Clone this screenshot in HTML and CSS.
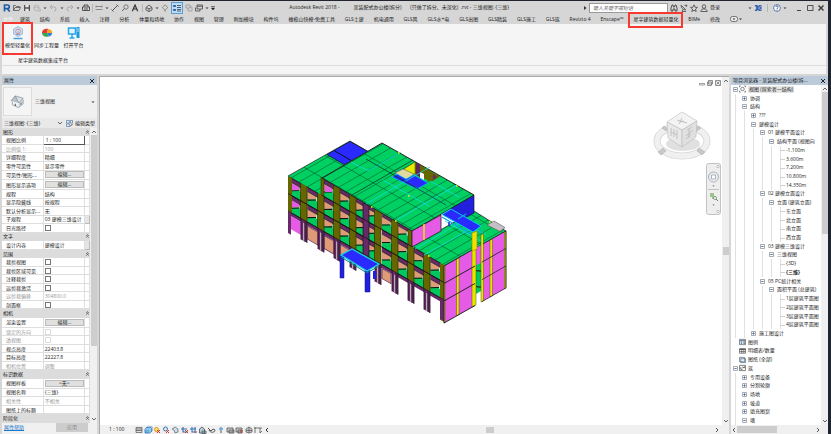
FILE: index.html
```html
<!DOCTYPE html>
<html lang="zh-CN">
<head>
<meta charset="utf-8">
<title>Autodesk Revit 2018</title>
<link rel="stylesheet" href="styles.css">
</head>
<body>
<svg class="defs" aria-hidden="true">
  <defs>
    <symbol id="plus" viewBox="0 0 5 5"><path d="M.5.5h4v4h-4z" fill="#fff" stroke="#8d97a3" stroke-width=".8"/><path d="M1.3 2.5h2.4M2.5 1.3v2.4" stroke="#445b86" stroke-width=".8"/></symbol>
    <symbol id="minus" viewBox="0 0 5 5"><path d="M.5.5h4v4h-4z" fill="#fff" stroke="#8d97a3" stroke-width=".8"/><path d="M1.3 2.5h2.4" stroke="#445b86" stroke-width=".8"/></symbol>
    <symbol id="fold" viewBox="0 0 6 6"><path d="M1.5 3 3 1.3 4.500 3M1.500 5 3 3.300 4.500 5" fill="none" stroke="#333" stroke-width=".8"/></symbol>
    <symbol id="up" viewBox="0 0 6 6"><path d="M1 4 3 2l2 2" fill="none" stroke="#555" stroke-width=".9"/></symbol>
    <symbol id="down" viewBox="0 0 6 6"><path d="M1 2l2 2 2-2" fill="none" stroke="#555" stroke-width=".9"/></symbol>
    <symbol id="left" viewBox="0 0 6 6"><path d="M4 1 2 3l2 2" fill="none" stroke="#444" stroke-width=".9"/></symbol>
    <symbol id="right" viewBox="0 0 6 6"><path d="M2 1l2 2-2 2" fill="none" stroke="#444" stroke-width=".9"/></symbol>
    <symbol id="caret" viewBox="0 0 4 4"><path d="M.5 1.500h3L2 3z" fill="#333"/></symbol>
  </defs>
</svg>

<div class="app">
  <header class="titlebar">
    <div class="quick">
      <button aria-label="Revit"><svg viewBox="0 0 8 8"><path d="M1.500 7.500V1h3a1.800 1.800 0 0 1 0 3.600H2M4.300 4.600 6.800 7.500" fill="none" stroke="#1f5fa8" stroke-width="1.700"/></svg></button>
      <button aria-label="打开"><svg viewBox="0 0 8 8"><path d="M.5 6.500v-5h2l1 1h3v1M.5 6.500l1.500-3h5.500l-1.500 3z" fill="none" stroke="#555" stroke-width=".8"/></svg></button>
      <button aria-label="保存"><svg viewBox="0 0 8 8"><path d="M1 1h6v6H1z" fill="#555"/><path d="M2.300 1h3.400v2.300H2.300zM2.300 4.800h3.400V7H2.300z" fill="#e8e8e8"/></svg></button>
      <button aria-label="同步"><svg viewBox="0 0 8 8"><path d="M1 2.500 3.500 1 6 2.500v3L3.500 7 1 5.500zM1 2.500 3.500 4 6 2.500M5 6.500a1.500 1.500 0 1 0 2-2" fill="none" stroke="#aaa" stroke-width=".8"/></svg></button>
      <svg class="car"><use href="#caret"/></svg>
      <button aria-label="放弃"><svg viewBox="0 0 8 8"><path d="M3 1 1 3l2 2M1 3h4a2 2 0 0 1 0 4" fill="none" stroke="#aaa"/></svg></button>
      <svg class="car"><use href="#caret"/></svg>
      <button aria-label="重做"><svg viewBox="0 0 8 8"><path d="M5 1l2 2-2 2M7 3H3a2 2 0 0 0 0 4" fill="none" stroke="#aaa"/></svg></button>
      <svg class="car"><use href="#caret"/></svg>
      <button aria-label="打印"><svg viewBox="0 0 8 8"><path d="M2 3V1h4v2M.5 3h7v3.500h-7zM2 5h4" fill="none" stroke="#444" stroke-width=".9"/></svg></button>
      <i class="sep"></i>
      <button aria-label="测量"><svg viewBox="0 0 8 8"><path d="M1 1.500v2M7 1.500v2M1 2.500h6M.5 5.500h7" stroke="#777" stroke-width=".8"/></svg></button>
      <svg class="car"><use href="#caret"/></svg>
      <button aria-label="对齐"><svg viewBox="0 0 8 8"><path d="M1 7 7 1M.5 5.500l2 2M5.500.5l2 2" stroke="#555"/></svg></button>
      <button aria-label="标记"><svg viewBox="0 0 8 8"><circle cx="5" cy="3" r="2.200" fill="none" stroke="#666" stroke-width=".8"/><path d="M1 7l2.500-2.500" stroke="#666"/></svg></button>
      <button aria-label="文字"><svg viewBox="0 0 8 8"><path d="M1.300 7.300 4 1l2.700 6.300M2.300 5h3.400" fill="none" stroke="#333" stroke-width="1.200"/></svg></button>
      <i class="sep"></i>
      <button aria-label="三维视图"><svg viewBox="0 0 8 8"><path d="M1 3.500 4 1l3 2.500V6L4 7.500 1 6zM1 3.500l3 1.300 3-1.300M4 5v2.500" fill="none" stroke="#555" stroke-width=".9"/></svg></button>
      <svg class="car"><use href="#caret"/></svg>
      <button aria-label="剖面"><svg viewBox="0 0 8 8"><path d="M4 .8 6.800 3.500 4 6.200 1.200 3.500zM4 6v1.800" fill="none" stroke="#777" stroke-width=".8"/></svg></button>
      <button class="on" aria-label="细线"><svg viewBox="0 0 8 8"><path d="M0 1h3v2H0zM0 5h3v2H0z" fill="#3f6ea5"/><path d="M4 1.500h4M4 3.500h4M4 5.500h4M4 7h4" stroke="#345" stroke-width=".8"/></svg></button>
      <button aria-label="关闭隐藏"><svg viewBox="0 0 8 8"><path d="M1 1h4v3H1zM3 4v3h4V3H5" fill="none" stroke="#999" stroke-width=".8"/></svg></button>
      <button aria-label="切换窗口"><svg viewBox="0 0 8 8"><path d="M2 1h5.500v4H2zM.5 3.500V7h4.500V5M2 2.300h5.500" fill="none" stroke="#555" stroke-width=".9"/></svg></button>
      <svg class="car"><use href="#caret"/></svg>
      <svg class="car"><path d="M0 .5h4M.5 2h3L2 4z" stroke="#333" stroke-width=".6"/></svg>
    </div>
    <h1 class="caption">Autodesk Revit 2018 - &emsp;&emsp;&nbsp; 某装配式办公楼(拆分) &emsp;&nbsp; (只做了拆分、未深化) &nbsp;.rvt - 三维视图: {三维}</h1>
    <div class="account">
      <svg class="car"><path d="M1 0l2.500 2L1 4z" fill="#333"/></svg>
      <input type="text" aria-label="搜索" placeholder="键入关键字或短语">
      <button aria-label="搜索"><svg viewBox="0 0 8 8"><path d="M1 7V4l1-3h1l.5 2h1L5 1h1l1 3v3H5V5H3v2z" fill="none" stroke="#444" stroke-width=".9"/></svg></button>
      <button aria-label="通讯中心"><svg viewBox="0 0 8 8"><path d="M1 1c0 3 2 5 5 5M1.500 1.500 5.500 5.500M3 5.500 2 7.500h4M4.500 1.500 7 1M6 3l1-2" fill="none" stroke="#444" stroke-width=".8"/></svg></button>
      <button aria-label="收藏"><svg viewBox="0 0 8 8"><path d="M4 .8 5 3.200l2.500.2-2 1.600.7 2.500L4 6.200 1.800 7.500l.7-2.500-2-1.600L3 3.200z" fill="none" stroke="#444" stroke-width=".8"/></svg></button>
      <button aria-label="用户"><svg viewBox="0 0 8 8"><circle cx="4" cy="2.500" r="1.800" fill="none" stroke="#444" stroke-width=".8"/><path d="M.8 7.500c.2-2 1.500-2.700 3.200-2.700s3 .7 3.200 2.700z" fill="none" stroke="#444" stroke-width=".8"/></svg></button>
      <a class="login" href="#">登录</a>
      <svg class="car"><use href="#caret"/></svg>
      <button aria-label="Exchange"><svg viewBox="0 0 8 8"><path d="M.5 1h3L4 2.500 5 1h2.500v6h-3L4 5.500 3 7H.5l2-3z" fill="#3a62b0"/><path d="M4.500 4 7 2M4.500 4 7 6" stroke="#d8e2f4" stroke-width=".6"/></svg></button>
      <i class="sep"></i>
      <button aria-label="帮助"><svg viewBox="0 0 8 8"><circle cx="4" cy="4" r="3.400" fill="#fff" stroke="#3d5d8a" stroke-width=".8"/><path d="M2.800 3c0-1.600 2.400-1.500 2.400 0C5.200 4 4 3.800 4 5M4 5.500v1" fill="none" stroke="#2d57a0" stroke-width=".9"/></svg></button>
      <svg class="car"><use href="#caret"/></svg>
    </div>
    <div class="winbtns">
      <button aria-label="最小化"><svg viewBox="0 0 8 8"><path d="M2 6.500h4" stroke="#444"/></svg></button>
      <button aria-label="最大化"><svg viewBox="0 0 8 8"><path d="M1.500 1.500h5.500v5H1.500z" fill="none" stroke="#444" stroke-width=".9"/></svg></button>
      <button aria-label="关闭"><svg viewBox="0 0 8 8"><path d="M1.500 1.500l5 5M6.500 1.500l-5 5" stroke="#333" stroke-width="1.300"/></svg></button>
    </div>
  </header>

  <nav class="tabs">
    <a class="file" href="#">文件</a><a href="#">建筑</a><a href="#">结构</a><a href="#">系统</a><a href="#">插入</a><a href="#">注释</a><a href="#">分析</a><a href="#">体量和场地</a><a href="#">协作</a><a href="#">视图</a><a href="#">管理</a><a href="#">附加模块</a><a href="#">构件坞</a><a href="#">橄榄山快模-免费工具</a><a href="#">GLS土建</a><a href="#">机电通用</a><a href="#">GLS风</a><a href="#">GLS水+电</a><a href="#">GLS出图</a><a href="#">GLS精装</a><a href="#">GLS施工</a><a href="#">GLS族</a><a href="#">Revizto 4</a><a href="#">Enscape™</a><a class="active" href="#">星宇建筑数据轻量化</a><a href="#">BIMe</a><a href="#">修改</a>
    <button aria-label="最小化功能区"><svg viewBox="0 0 12 8"><rect x=".5" y="1.500" width="7" height="5" rx="2" fill="#eee" stroke="#555" stroke-width=".8"/><path d="M2.500 3.500h3L4 5zM9 3.500h3L10.500 5z" fill="#333"/></svg></button>
  </nav>

  <section class="ribbon">
    <div class="tools">
      <button class="tool marked"><svg viewBox="0 0 14 14"><path d="M7 .5 11.500 3v5L7 10.500 2.500 8V3z" fill="#c9dcf2" stroke="#8fb4dc" stroke-width=".8"/><circle cx="7" cy="5.500" r="2.300" fill="#e7edf5" stroke="#db8a93"/><path d="M7 4.500v4M5 8.500h4" stroke="#7fa6d4"/><path d="M2.500 12.500h9" stroke="#49a0de" stroke-width="1.500"/></svg>模型轻量化</button>
      <button class="tool"><svg viewBox="0 0 14 14"><path d="M2 7c0-4 4-4.500 6-4L7 7z" fill="#e6392f"/><path d="M8 3c3 .2 4.500 2 4 4H7z" fill="#f6a81c"/><path d="M2 7h5l2 3.500C5 11.500 2 10 2 7z" fill="#36a852"/><path d="M7 7h5c0 2-1 3-3 3.500z" fill="#3478e0"/></svg>同步工程量</button>
      <button class="tool"><svg viewBox="0 0 14 14"><path d="M1.500 2h7v6h-7z" fill="#dff3fd" stroke="#27a5e5" stroke-width="1.500"/><path d="M5 8v4M2.500 12h5" stroke="#27a5e5" stroke-width="1.500"/><path d="M9.500 1h3v11h-3z" fill="#179be0"/><path d="M10 3h2M10 5h2" stroke="#fff" stroke-width=".7"/></svg>打开平台</button>
    </div>
    <p class="group">星宇建筑数据集成平台</p>
  </section>

  <main class="work">
    <aside class="props">
      <h2 class="bar">属性<button aria-label="关闭属性"><svg viewBox="0 0 6 6"><path d="M1 1l4 4M5 1 1 5" stroke="#222"/></svg></button></h2>
      <div class="type">
        <span class="thumb"><svg viewBox="0 0 16 16"><path d="M2.500 7.500 9 10v4.500L2.500 11.500z" fill="#f4f6f7"/><path d="M9 10l4.500-4.500V11L9 14.500z" fill="#cfd5da"/><path d="M9 9.500 5.500 2 14 4.500v2z" fill="#dfe3e6"/><path d="M1 7.500 5.500 2 9.500 9.500z" fill="#b9c1c8"/><path d="M1 7.500 5.500 2 14 4.500M5.500 2 9.500 9.500 14 4.500M2.500 8v3.500L9 14.500l5-4V6" fill="none" stroke="#74818c" stroke-width=".7"/><path d="M5 10l1.500.6V13L5 12.400zM11 10l1.300-1.200v1.800L11 11.700z" fill="#66737e"/></svg></span>
        <span class="typename">三维视图</span><svg class="car"><use href="#caret"/></svg>
      </div>
      <div class="instance">
        <select aria-label="视图"><option>三维视图: {三维}</option></select>
        <svg class="chev"><use href="#down"/></svg>
        <button><svg viewBox="0 0 8 8"><path d="M.5.500h3.300v3H.5zM.5 4.500h3.300v3H.5zM5 .5h2.500v3H5z" fill="#eaf2fa" stroke="#3c648f" stroke-width=".7"/><path d="M4.500 7.500l3-3" stroke="#333"/></svg>编辑类型</button>
      </div>
      <div class="scroller">
        <div class="tablewrap">
        <table class="grid">
          <tr class="head"><th colspan="2">图形</th><td><svg><use href="#fold"/></svg></td></tr>
          <tr><th>视图比例</th><td class="edit"><input type="text" aria-label="视图比例" value="1 : 100"></td><td></td></tr>
          <tr class="dim"><th>比例值 1:</th><td>100</td><td></td></tr>
          <tr><th>详细程度</th><td>精细</td><td></td></tr>
          <tr><th>零件可见性</th><td>显示零件</td><td></td></tr>
          <tr><th>可见性/图形...</th><td><button>编辑...</button></td><td></td></tr>
          <tr><th>图形显示选项</th><td><button>编辑...</button></td><td></td></tr>
          <tr><th>规程</th><td>结构</td><td></td></tr>
          <tr><th>显示隐藏线</th><td>按规程</td><td></td></tr>
          <tr><th>默认分析显示...</th><td>无</td><td></td></tr>
          <tr><th>子规程</th><td>03 建模三维设计</td><td class="more"></td></tr>
          <tr><th><label for="sun">日光路径</label></th><td><input id="sun" type="checkbox"></td><td></td></tr>
          <tr class="head"><th colspan="2">文字</th><td><svg><use href="#fold"/></svg></td></tr>
          <tr><th>设计内容</th><td>建模设计</td><td class="more"></td></tr>
          <tr class="head"><th colspan="2">范围</th><td><svg><use href="#fold"/></svg></td></tr>
          <tr><th><label for="c1">裁剪视图</label></th><td><input id="c1" type="checkbox"></td><td></td></tr>
          <tr><th><label for="c2">裁剪区域可见</label></th><td><input id="c2" type="checkbox"></td><td></td></tr>
          <tr><th><label for="c3">注释裁剪</label></th><td><input id="c3" type="checkbox"></td><td></td></tr>
          <tr><th><label for="c4">远剪裁激活</label></th><td><input id="c4" type="checkbox"></td><td></td></tr>
          <tr class="dim"><th>远剪裁偏移</th><td>304800.0</td><td></td></tr>
          <tr><th><label for="c5">剖面框</label></th><td><input id="c5" type="checkbox"></td><td></td></tr>
          <tr class="head"><th colspan="2">相机</th><td><svg><use href="#fold"/></svg></td></tr>
          <tr><th>渲染设置</th><td><button>编辑...</button></td><td></td></tr>
          <tr class="dim"><th><label for="c6">锁定的方向</label></th><td><input id="c6" type="checkbox" disabled></td><td></td></tr>
          <tr class="dim"><th><label for="c7">透视图</label></th><td><input id="c7" type="checkbox" disabled></td><td></td></tr>
          <tr><th>视点高度</th><td>22403.8</td><td></td></tr>
          <tr><th>目标高度</th><td>22227.8</td><td></td></tr>
          <tr class="dim"><th>相机位置</th><td>调整</td><td></td></tr>
          <tr class="head"><th colspan="2">标识数据</th><td><svg><use href="#fold"/></svg></td></tr>
          <tr><th>视图样板</th><td><button>&lt;无&gt;</button></td><td></td></tr>
          <tr><th>视图名称</th><td>{三维}</td><td></td></tr>
          <tr class="dim"><th>相关性</th><td>不相关</td><td></td></tr>
          <tr><th>图纸上的标题</th><td></td><td></td></tr>
          <tr class="head"><th colspan="2">阶段化</th><td><svg><use href="#fold"/></svg></td></tr>
        </table>
        </div>
        <div class="vbar"><svg><use href="#up"/></svg><i class="knob"></i><svg><use href="#down"/></svg></div>
      </div>
      <footer class="help"><a href="#">属性帮助</a><button disabled>应用</button></footer>
    </aside>

    <section class="view">
      <div class="scene">
        <svg class="model" viewBox="285 138 226 188" role="img" aria-label="三维模型">
          <defs>
            <pattern id="roof" width="16" height="21" patternUnits="userSpaceOnUse" patternTransform="matrix(1 .57 1 -.57 323 179)">
              <rect width="16" height="21" fill="#00d062"/><path d="M0 0h16M0 0v21" stroke="#04371c" stroke-width=".8"/><path d="M8 0v21" stroke="#045c2c" stroke-width=".5"/>
            </pattern>
            <g id="bay">
              <path d="M0 0h10.500v17.500H0z" fill="#12210f"/><path d="M0 9.500 10.500 5v12.500H0z" fill="#00c85e"/><path d="M0 4h8.500v3.500L0 12.500z" fill="#dd9b77"/><path d="M0 13 8.500 8" stroke="#111" stroke-width=".9"/><path d="M8.700 4h1.800v5H8.700z" fill="#e8f5ea"/><path d="M0 .5h10.500v4H0z" fill="#662a66"/><path d="M0 .3h10.500M0 4.500h10.500M0 17.500h10.500" stroke="#222" stroke-width=".6"/>
            </g>
            <g id="col"><path d="M-.5 0h6.500v35h-6.500z" fill="#666600"/><path d="M-.5 0v35M6 0v35M0 17.500h6" stroke="#2c2c00" stroke-width=".6"/><path d="M0 35h6v21H0z" fill="#662a66"/><path d="M2 38v18h1.500V38z" fill="#b9a9b9"/><path d="M0 35v21M6 35v21M4 36v20" stroke="#1d0b1d" stroke-width=".7"/></g>
          </defs>
          <path d="M289 177 351 142 369 152.500 323 180 323 197z" fill="url(#roof)" stroke="#222" stroke-width=".7"/>
          <path d="M328 155.500 351 142.500 369 152.500 346 166z" fill="#2a2aff" stroke="#111" stroke-width=".7"/><path d="M335 151.500 353 162" stroke="#111"/>
          <path d="M413 247 475 212 507 232 445 267z" fill="url(#roof)" stroke="#222" stroke-width=".8"/>
          <path d="M488 226l7-4 11 6.500-5 4z" fill="#c6c0c6" stroke="#555" stroke-width=".6"/>
          <path d="M452 213v-4l23-13v18l-14 8z" fill="#2020dd" stroke="#111" stroke-width=".6"/>
          <g transform="matrix(1 .57 0 1 289 177)">
            <path d="M3 35h149v3.500H3z" fill="#662a66"/>
            <path d="M3 38.500h10v13H3z" fill="#e65be6"/><path d="M19 39h11v13H19zM36 39h10v13H36zM52 39h10v9H52zM94 39h9v10h-9z" fill="#dd9b77" stroke="#662a66" stroke-width=".8"/>
            <use href="#bay" x="3" y="0"/><use href="#bay" x="19.500" y="0"/><use href="#bay" x="36"/><use href="#bay" x="52"/><use href="#bay" x="68"/><use href="#bay" x="78"/><use href="#bay" x="94"/><use href="#bay" x="110"/><use href="#bay" x="126"/><use href="#bay" x="142.500"/>
            <use href="#bay" x="3" y="17.500"/><use href="#bay" x="19.500" y="17.500"/><use href="#bay" x="36" y="17.500"/><use href="#bay" x="52" y="17.500"/><use href="#bay" x="68" y="17.500"/><use href="#bay" x="78" y="17.500"/><use href="#bay" x="94" y="17.500"/><use href="#bay" x="110" y="17.500"/><use href="#bay" x="126" y="17.500"/><use href="#bay" x="142.500" y="17.500"/>
            <use href="#bay" x="36" y="-17.500"/><use href="#bay" x="52" y="-17.500"/><use href="#bay" x="68" y="-17.500"/><use href="#bay" x="78" y="-17.500"/><use href="#bay" x="94" y="-17.500"/><use href="#bay" x="110" y="-17.500"/>
            <path d="M4 5h7v3l-7 4zM4 22h7v3l-7 4zM37-12h7v3l-7 4z" fill="#e65be6"/>
            <path d="M0 0h4v35H0z" fill="#666600"/><path d="M0 35h3v22H0z" fill="#662a66"/>
            <use href="#col" x="13"/><use href="#col" x="30"/><use href="#col" x="46"/><use href="#col" x="62"/><use href="#col" x="87"/><use href="#col" x="104"/><use href="#col" x="120"/><use href="#col" x="136"/>
            <path d="M33-17.500h3V0h-3zM45.500-17.500h6.500V0h-6.500zM61.500-17.500H68V0h-6.500zM86.500-17.500h7V0h-7zM103.500-17.500h6.500V0h-6.500zM120-17.500h4V0h-4z" fill="#666600" stroke="#2c2c00" stroke-width=".5"/>
            <path d="M75-16h6v62h-6z" fill="#662a66" stroke="#1d0b1d" stroke-width=".6"/><path d="M152 0h4v57h-4z" fill="#666600"/><path d="M152 35h4v21h-4z" fill="#662a66"/>
            <path d="M0 17.500h156M0 35h156M34 0h90" stroke="#151515" stroke-width=".7"/>
          </g>
          <path d="M323 179 383 144 475 196 413 232z" fill="url(#roof)" stroke="#222" stroke-width="1"/>
          <path d="M405 170 416 163v12l-8 2z" fill="#e9e900" stroke="#444" stroke-width=".5"/>
          <path d="M416 163 441 177.500 432 183 416 175z" fill="#666600"/><path d="M417 164v12l4 2v-13z" fill="#5d275d"/><path d="M421 173l4 2v6l-4-2z" fill="#fff"/><path d="M434 175l4 3-4 3z" fill="#662a66"/>
          <path d="M396 174 404 170l11 5-8 6z" fill="#dedaa2" stroke="#555" stroke-width=".5"/>
          <path d="M393 178 398 175 407 180 415 176 429 184 418 190z" fill="#2a2aff" stroke="#00cfee" stroke-width=".7"/>
          <path d="M352 163l17 9 33-19M367 205l64-37M396 222l62-36M384 181l46 26M416 188l31 18M431 182l29 16M416 250l48-28M446 222l36 20M425 256l50-28M450 216l37 20" fill="none" stroke="#10dbe0" stroke-width=".8"/>
          <path d="M353 196l61-35M367 160l80 46" stroke="#093a20" fill="none" stroke-width=".8"/>
          <path d="M413 232 442 216v16l-29 16z" fill="#e65be6" stroke="#222" stroke-width=".8"/><path d="M425 225v16" stroke="#e5e500" stroke-width="1.500"/>
          <path d="M443 215.500 452 210 482 227 474 233z" fill="#2a2aff" stroke="#00cfee" stroke-width="1"/><path d="M443 218l31 18 8-5M459 220l8-5" stroke="#0da6df" fill="none" stroke-width="1.300"/><path d="M450 223v4" stroke="#2424d0" stroke-width="1.500"/>
          <g transform="matrix(1 -.565 0 1 445 267)">
            <path d="M0 0h62v57H0z" fill="#e65be6"/><path d="M31 17.500h7V48h-7z" fill="#00c85e"/><path d="M31 46h7v12h-7z" fill="#fff"/><path d="M31 22l6 4M31 38l6 4" stroke="#222"/>
            <path d="M12.500 0h2.500v57h-2.500zM28-6h4v63h-4zM37-10h2.500v67H37zM46 0h2.500v57H46zM60.500 0H62v57h-1.500zM0 0h1v57H0z" fill="#e5e500" stroke="#4c4c00" stroke-width=".4"/>
            <path d="M0 0h28M39 0h23M0 57h31M38 57h24M62 0v57M0 0v57M0 17.500h31M38 17.500h24M0 35h31M38 35h24" fill="none" stroke="#222" stroke-width=".8"/>
          </g>
          <path d="M473 234l5-2v18l-5 2z" fill="#f1df00" stroke="#9c8800" stroke-width=".6"/>
          <path d="M399 154h1.500M372 208h1.500M396 222h1.500M409 197h1.500M457 187h1.500M429 257h1.500M490 223h1.500" stroke="#fff000" stroke-width="1.500"/>
          <path d="M341 256h4v23h-4zM366 271h5v22h-5z" fill="#2020df" stroke="#10107a" stroke-width=".5"/><path d="M374 272h3v8h-3z" fill="#2020df"/>
          <path d="M342 256 353 250l27 15-12 7z" fill="#2a2aff" stroke="#12d3da" stroke-width="1.400"/><path d="M342 258l26 16 12-7" stroke="#0c7c8b" fill="none"/>
        </svg>
        <div class="mdi"><button aria-label="最小化视图"><svg viewBox="0 0 6 6"><path d="M.5 3.500h5v1.500h-5z" fill="#fff" stroke="#777" stroke-width=".7"/></svg></button><button aria-label="还原视图"><svg viewBox="0 0 6 6"><path d="M1.500.5h4v3.500h-4zM.5 2h4v3.500h-4z" fill="#eee" stroke="#777" stroke-width=".8"/></svg></button><button aria-label="关闭视图"><svg viewBox="0 0 6 6"><path d="M.5.500h5v5h-5zM1.500 1.500l3 3M4.500 1.500l-3 3" fill="#eee" stroke="#777" stroke-width=".8"/></svg></button></div>
        <svg class="cube" viewBox="0 0 58 50" role="img" aria-label="ViewCube">
          <ellipse cx="29" cy="30" rx="25" ry="15" fill="none" stroke="#d4d4d4" stroke-width="7"/><ellipse cx="29" cy="30" rx="25" ry="15" fill="none" stroke="#f0f0f0" stroke-width="5.500"/>
          <ellipse cx="30" cy="33" rx="17" ry="7" fill="#e0e0e0"/>
          <path d="M5 41l5-4 3 3-5 4zM46 37l6 4-3 3-5-4zM11 15l4 3-2 2-4-3zM45 15l-3 3 2 2 4-3z" fill="#c8c8c8" stroke="#aaa" stroke-width=".5"/>
          <path d="M14 11 29 1l15 9-15 9z" fill="#f3f3f3" stroke="#bbb" stroke-width=".6"/><path d="M14 11l15 8v17L15 27z" fill="#e9e9e9" stroke="#bbb" stroke-width=".6"/><path d="M44 10 29 19v17l14-10z" fill="#e0e0e0" stroke="#bbb" stroke-width=".6"/>
          <path d="M24 9l10 3M29 7l-3 6M27 11l4-1M18 17v8M21 18v8M18 21l6 3M24 19v9M34 19l5-3M33 25l7-6M36 18v9M33 28l5-5" stroke="#bcbcbc" fill="none" stroke-width=".9"/>
        </svg>
        <svg class="navbar" viewBox="0 0 15 52" role="img" aria-label="导航栏">
          <rect x=".5" y=".5" width="14" height="51" rx="2" fill="#eee" stroke="#c2c2c2"/><circle cx="12" cy="3.500" r="1.200" fill="#fff" stroke="#999" stroke-width=".6"/><circle cx="7.500" cy="14" r="5" fill="#e9edf0" stroke="#aab2b8"/><path d="M5.500 12h4v4h-4z" fill="#fff" stroke="#9aa5ae" stroke-width=".8"/><path d="M6.500 22.500h2l-1 1.200zM6.500 41.500h2l-1 1.200z" fill="#555"/><path d="M2 26.500h11" stroke="#c5c5c5"/><path d="M4 30h4v4H4zM6 33h4v3H6z" fill="#9dc390"/><circle cx="9" cy="35" r="1.500" fill="#fff" stroke="#66816a" stroke-width=".7"/><path d="M10 36l2 2" stroke="#66816a"/><circle cx="12" cy="48.500" r="1.200" fill="#fff" stroke="#999" stroke-width=".6"/>
        </svg>
      </div>
      <div class="vbar viewbar"><svg><use href="#up"/></svg><i class="knob"></i><svg><use href="#down"/></svg></div>
      <footer class="controls">
        <span class="scale">1 : 100</span>
        <svg class="strip" viewBox="0 0 134 8" role="img" aria-label="视图控制">
          <path d="M1 1.500h6v5H1zM1 3h6M1 4.500h6" fill="#ddd" stroke="#555" stroke-width=".7"/>
          <path d="M10 3l2-2h5v4l-2 2h-5z" fill="#69b2e8" stroke="#2867a0" stroke-width=".7"/><path d="M10 3h5v4M15 3l2-2" stroke="#e8f5ff" stroke-width=".5" fill="none"/>
          <circle cx="21.500" cy="3.500" r="2" fill="#ffe06a" stroke="#d79a20"/><path d="M22 4l3 3M25 4l-3 3" stroke="#d32" stroke-width="1"/>
          <circle cx="30.500" cy="3" r="2" fill="#e2effa" stroke="#3d75aa"/><path d="M31 4l3 3M34 4l-3 3" stroke="#d32"/>
          <path d="M37 3l3-2 3 2v3l-3 1-1-3z" fill="#d2dde5" stroke="#506677" stroke-width=".7"/>
          <path d="M46 3h6M48 1v5h5" stroke="#3573b4" stroke-width="1.200" fill="none"/><path d="M50 4l3 3M53 4l-3 3" stroke="#d32"/>
          <path d="M55 3h6M57 1v5h5M60 1v4" stroke="#3573b4" stroke-width="1.100" fill="none"/><path d="M59 6h2" stroke="#d32"/>
          <path d="M64.500 3l2.500-2 2.500 2v4h-5zM67 5h4v2.500h-4z" fill="#b9cad4" stroke="#48575f" stroke-width=".8"/>
          <path d="M73 2l3 3 2-2 2 1c0 3-5 3-6 0" fill="none" stroke="#555"/><circle cx="86" cy="3" r="1.400" fill="#83c4f2" stroke="#3877b4" stroke-width=".6"/><path d="M86 5v2" stroke="#555"/>
          <path d="M92 2h6v4h-6zM94 4h5v3h-5zM101 2h6v4h-6zM103 4h4v3h-4z" fill="#ccc" stroke="#555" stroke-width=".8"/><path d="M105 4l2 3" stroke="#d32"/><path d="M111 3l3-2 3 2v3l-3 1-3-1zM111 4.500h6M114 1v6" fill="#ccc" stroke="#555" stroke-width=".7"/><path d="M120 1v6M119 2h8M125 2v5l2-2" fill="none" stroke="#555" stroke-width=".8"/><path d="M133 2l-2 2 2 2" fill="none" stroke="#333"/>
        </svg>
        <i class="hknob"></i>
        <svg class="chev"><use href="#right"/></svg>
      </footer>
    </section>

    <aside class="browser">
      <h2 class="bar">项目浏览器 - 某装配式办公楼(拆...<button aria-label="关闭项目浏览器"><svg viewBox="0 0 6 6"><path d="M1 1l4 4M5 1 1 5" stroke="#222"/></svg></button></h2>
      <div class="scroller">
        <ul class="tree">
          <li class="l0"><svg class="tg"><use href="#minus"/></svg><svg class="ic" viewBox="0 0 8 8"><path d="M.5 2V.5H2M6 .5h1.500V2M7.500 6v1.500H6M2 7.500H.5V6" fill="none" stroke="#555" stroke-width=".8"/><circle cx="4" cy="4" r="2" fill="none" stroke="#555" stroke-width=".8"/></svg><span class="sel">视图 (探索者—结构)</span></li>
          <li class="l1"><svg class="tg"><use href="#plus"/></svg>协调</li>
          <li class="l1"><svg class="tg"><use href="#minus"/></svg>结构</li>
          <li class="l2"><svg class="tg"><use href="#plus"/></svg>???</li>
          <li class="l2"><svg class="tg"><use href="#minus"/></svg>建模设计</li>
          <li class="l3"><svg class="tg"><use href="#minus"/></svg>01 建模平面设计</li>
          <li class="l4"><svg class="tg"><use href="#minus"/></svg>结构平面 (视图向</li>
          <li class="l5">-1.100m</li>
          <li class="l5">3.600m</li>
          <li class="l5">7.200m</li>
          <li class="l5">10.800m</li>
          <li class="l5">14.350m</li>
          <li class="l3"><svg class="tg"><use href="#minus"/></svg>02 建模立面设计</li>
          <li class="l4"><svg class="tg"><use href="#minus"/></svg>立面 (建筑立面)</li>
          <li class="l5">东立面</li>
          <li class="l5">北立面</li>
          <li class="l5">南立面</li>
          <li class="l5">西立面</li>
          <li class="l3"><svg class="tg"><use href="#minus"/></svg>03 建模三维设计</li>
          <li class="l4"><svg class="tg"><use href="#minus"/></svg>三维视图</li>
          <li class="l5">{3D}</li>
          <li class="l5"><b>{三维}</b></li>
          <li class="l3"><svg class="tg"><use href="#minus"/></svg>05 PC统计相关</li>
          <li class="l4"><svg class="tg"><use href="#minus"/></svg>面积平面 (总建筑)</li>
          <li class="l5">1层建筑平面图</li>
          <li class="l5">2层建筑平面图</li>
          <li class="l5">3层建筑平面图</li>
          <li class="l5">4层建筑平面图</li>
          <li class="l2"><svg class="tg"><use href="#plus"/></svg>施工图设计</li>
          <li class="l0"><i class="tg"></i><svg class="ic" viewBox="0 0 8 8"><path d="M.5 1h7v6h-7z" fill="#e9eef3" stroke="#4e6175" stroke-width=".8"/><path d="M.5 2.500h7M2 4h1.500M2 5.500h1.500M5 4h2M5 5.500h2" stroke="#4e6175"/></svg>图例</li>
          <li class="l0"><i class="tg"></i><svg class="ic" viewBox="0 0 8 8"><path d="M.5 1.500h7v5h-7zM.5 4.500h7M3 2v4.500M5.500 2v4.500" fill="#fff" stroke="#555" stroke-width=".8"/><path d="M.5 2h7" stroke="#555" stroke-width="1.500"/></svg>明细表/数量</li>
          <li class="l0"><i class="tg"></i><svg class="ic" viewBox="0 0 8 8"><path d="M.5 1h6v5h-6zM2 2.500h5.500V7H2z" fill="#eaf2f8" stroke="#526b83" stroke-width=".8"/></svg>图纸 (全部)</li>
          <li class="l0"><svg class="tg"><use href="#minus"/></svg><svg class="ic" viewBox="0 0 8 8"><path d="M.5 1h7v6h-7z" fill="#f5f5f5" stroke="#555" stroke-width=".8"/><path d="M2 3v2.500h2M4 3.500h2.500V2M4.500 2.500l1 1" stroke="#444" stroke-width=".8" fill="none"/></svg>族</li>
          <li class="l1"><svg class="tg"><use href="#plus"/></svg>专用设备</li>
          <li class="l1"><svg class="tg"><use href="#plus"/></svg>分割轮廓</li>
          <li class="l1"><svg class="tg"><use href="#plus"/></svg>场地</li>
          <li class="l1"><svg class="tg"><use href="#plus"/></svg>坡道</li>
          <li class="l1"><svg class="tg"><use href="#plus"/></svg>填充图案</li>
          <li class="l1"><svg class="tg"><use href="#minus"/></svg>墙</li>
        </ul>
        <div class="vbar"><svg><use href="#up"/></svg><i class="knob"></i><svg><use href="#down"/></svg></div>
      </div>
      <div class="hbar"><svg><use href="#left"/></svg><i></i><svg><use href="#right"/></svg></div>
    </aside>
  </main>
</div>
</body>
</html>
```
FILE: styles.css
```css
* { box-sizing: border-box; }
html, body { height: 100%; }
body {
  margin: 0;
  background: #20242e;
  color: #1c1c1c;
  font: 5px/7px "Open Sans", "Noto Sans CJK SC", sans-serif;
}
.defs { position: absolute; width: 0; height: 0; }
button, input, select { font: inherit; color: inherit; margin: 0; padding: 0; border: 0; background: none; border-radius: 0; }
a { color: inherit; text-decoration: none; }
h1, h2, p, ul { margin: 0; padding: 0; font-size: inherit; font-weight: 400; }
svg { display: block; }
th { font-weight: 400; text-align: left; }

.app {
  display: flex;
  flex-direction: column;
  height: 100vh;
  margin-right: 3px;
  border-top: 1px solid #20242e;
  background: #d6d6d6;
}

.titlebar {
  display: flex;
  align-items: center;
  height: 13px;
  flex: none;
}
.titlebar button svg { width: 8px; height: 8px; }
.car { width: 4px; height: 4px; flex: none; }
.sep { width: 1px; height: 8px; background: #b5b5b5; }
.quick {
  display: flex;
  align-items: center;
  justify-content: space-between;
  flex: 0 0 26%;
  padding-left: 3px;
}
.quick .on { padding: 1px; background: #bcdcf5; border: 1px solid #5d9bd0; }
.caption { flex: 1; text-align: center; white-space: nowrap; }
.account { display: flex; align-items: center; gap: 2px; }
.account input {
  width: 79px;
  height: 10px;
  padding: 0 3px;
  background: #fff;
  border: 1px solid #999;
  font-style: italic;
}
.account input::placeholder { color: #666; opacity: 1; }
.account .login + .car { margin-left: 26px; }
.account .sep { margin: 0 3px; }
.winbtns { display: flex; gap: 3px; margin: 0 3px 0 8px; }

.tabs {
  display: flex;
  align-items: center;
  justify-content: space-between;
  height: 10px;
  flex: none;
  padding: 0 86px 0 3px;
  white-space: nowrap;
}
.tabs a { position: relative; }
.tabs .file { color: #f6f6f6; margin-right: -3px; }
.tabs .active::after {
  content: "";
  position: absolute;
  inset: -4px -5px -5px;
  border: 2px solid #f8392f;
}
.tabs svg { width: 12px; height: 8px; }

.ribbon {
  flex: none;
  height: 50px;
  margin: 0 2px;
  background: linear-gradient(#ddd, #ddd) 0 41px / 100% 1px no-repeat #f5f5f5;
}
.tools { display: flex; height: 33px; }
.tool {
  display: flex;
  flex-direction: column;
  align-items: center;
  gap: 2px;
  width: 27px;
  padding-top: 2px;
  white-space: nowrap;
}
.tool svg { width: 14px; height: 14px; }
.tool.marked { position: relative; width: 31px; }
.tool.marked::after {
  content: "";
  position: absolute;
  inset: -2px 0 2px 0;
  border: 2px solid #f8392f;
}
.group { padding-left: 16px; }

.work {
  display: grid;
  grid-template-columns: 97px 1fr 97px;
  gap: 2px;
  flex: 1;
  min-height: 0;
  padding-top: 2px;
}
.bar {
  display: flex;
  align-items: center;
  justify-content: space-between;
  flex: none;
  height: 9px;
  padding: 0 2px;
  background: #bccbda;
  white-space: nowrap;
}
.bar svg { width: 6px; height: 6px; }
.props, .browser { display: flex; flex-direction: column; min-width: 0; min-height: 0; background: #f0f0f0; }
.props { margin-left: 2px; }
.scroller { display: flex; flex: 1; min-height: 0; }
.vbar {
  display: flex;
  flex-direction: column;
  align-items: center;
  width: 7px;
  flex: none;
  padding: 1px 0;
  background: #f0f0f0;
}
.vbar svg { width: 6px; height: 6px; }
.vbar svg:last-child { margin-top: auto; }
.knob { width: 6px; background: #cdcdcd; }
.props .knob { height: 72%; }
.browser .knob { height: 42%; }

.type { display: flex; align-items: center; flex: none; height: 33px; padding: 0 2px 0 1px; }
.thumb { padding: 6px; border: 1px solid #ddd; background: #f5f5f5; }
.thumb svg { width: 15px; height: 15px; }
.typename { flex: 1; padding-left: 3px; }
.instance { display: flex; align-items: center; flex: none; height: 10px; padding: 0 2px; background: #e9e9e9; }
.instance select { appearance: none; flex: 1; min-width: 0; height: 9px; }
.chev { width: 6px; height: 6px; flex: none; }
.instance button { display: flex; align-items: center; gap: 2px; margin-left: 3px; white-space: nowrap; }
.instance button svg { width: 7px; height: 7px; }

.tablewrap { flex: 1; min-width: 0; overflow: hidden; background: #fff; }
.grid { width: 100%; height: 100%; border-collapse: collapse; table-layout: fixed; line-height: 6px; }
.grid th, .grid td { padding: 0 0 0 1px; border: 1px solid #dedede; border-width: 0 1px 1px 0; white-space: nowrap; overflow: hidden; }
.grid th { padding-left: 4px; width: 41px; }
.grid td:last-child { width: 5px; padding: 0; }
.grid .head th, .grid .head td { background: #dcdcdc; border-color: #dcdcdc; }
.grid .head th { width: 82px; padding-left: 1px; }
.grid .head svg { width: 5px; height: 6px; }
.grid tr:not(.head) th { width: 41px; }
.grid .dim { color: #999; }
.grid .edit { border: 1px solid #555; }
.grid .edit input { display: block; width: 100%; height: 6px; padding-left: 1px; }
.grid .more { background: #e5e5e5; border: 1px solid #bbb; }
.grid button { display: block; width: 100%; height: 7px; line-height: 5px; background: #e0e0e0; border: 1px solid #bbb; }
.grid input[type="checkbox"] { appearance: none; display: block; width: 6px; height: 6px; border: 1px solid #777; background: #fff; }
.grid input:disabled { border-color: #ddd; }
.help { display: flex; align-items: center; justify-content: space-between; flex: none; height: 11px; padding: 0 9px 2px 2px; }
.help a { color: #1b78c8; text-decoration: underline; }
.help button { width: 32px; height: 9px; background: #ccc; color: #888; }

.view { display: grid; grid-template: 1fr 9px / 1fr 7px; min-width: 0; background: #fff; border: 1px solid #aaa; border-width: 1px 0 0 1px; }
.scene { position: relative; overflow: hidden; }
.model { position: absolute; left: 184px; top: 60px; width: 226px; height: 188px; }
.mdi { position: absolute; right: 1px; top: 3px; display: flex; gap: 2px; }
.mdi svg { width: 6px; height: 6px; }
.cube { position: absolute; right: 11px; top: 34px; width: 58px; height: 50px; }
.navbar { position: absolute; right: 1px; top: 86px; width: 15px; height: 52px; }
.viewbar .knob { height: 8px; margin-top: 163px; }
.controls { grid-column: 1 / -1; display: flex; align-items: center; background: #f0f0f0; padding-left: 9px; }
.scale { width: 26px; }
.strip { width: 134px; height: 8px; }
.hknob { width: 8px; height: 6px; margin: 0 auto 0 35%; background: #cdcdcd; }
.controls .chev { margin-right: 9px; }

.browser .tree {
  display: grid;
  grid-auto-rows: 1fr;
  flex: 1;
  min-width: 0;
  list-style: none;
  background: #fff;
  overflow: hidden;
}
.tree li {
  position: relative;
  display: flex;
  align-items: center;
  min-height: 0;
  white-space: nowrap;
  background: repeating-linear-gradient(90deg, #e0e0e0 0 1px, transparent 1px 9px) 4px 0 / var(--in) 100% no-repeat;
  padding-left: calc(2px + var(--in));
}
.tree .tg { width: 5px; height: 5px; flex: none; margin-right: 3px; }
.tree .ic { width: 7px; height: 8px; flex: none; margin-right: 2px; }
.tree .sel { background: #e5e5e5; padding: 0 1px; }
.l0 { --in: 0px; }
.l1 { --in: 9px; }
.l2 { --in: 18px; }
.l3 { --in: 27px; }
.l4 { --in: 36px; }
.l5 { --in: 46px; }
.tree .l0 .tg { margin-right: 1px; }
.tree .l5 { padding-left: 55px; }
.tree .l5::before { content: ""; position: absolute; left: 49px; top: 50%; width: 5px; height: 1px; background: #d0d0d0; }
.hbar { display: flex; align-items: center; flex: none; height: 9px; padding-right: 7px; }
.hbar svg { width: 6px; height: 6px; }
.hbar svg:last-child { margin-left: auto; }
.hbar i { width: 40px; height: 7px; background: #cdcdcd; }
```
